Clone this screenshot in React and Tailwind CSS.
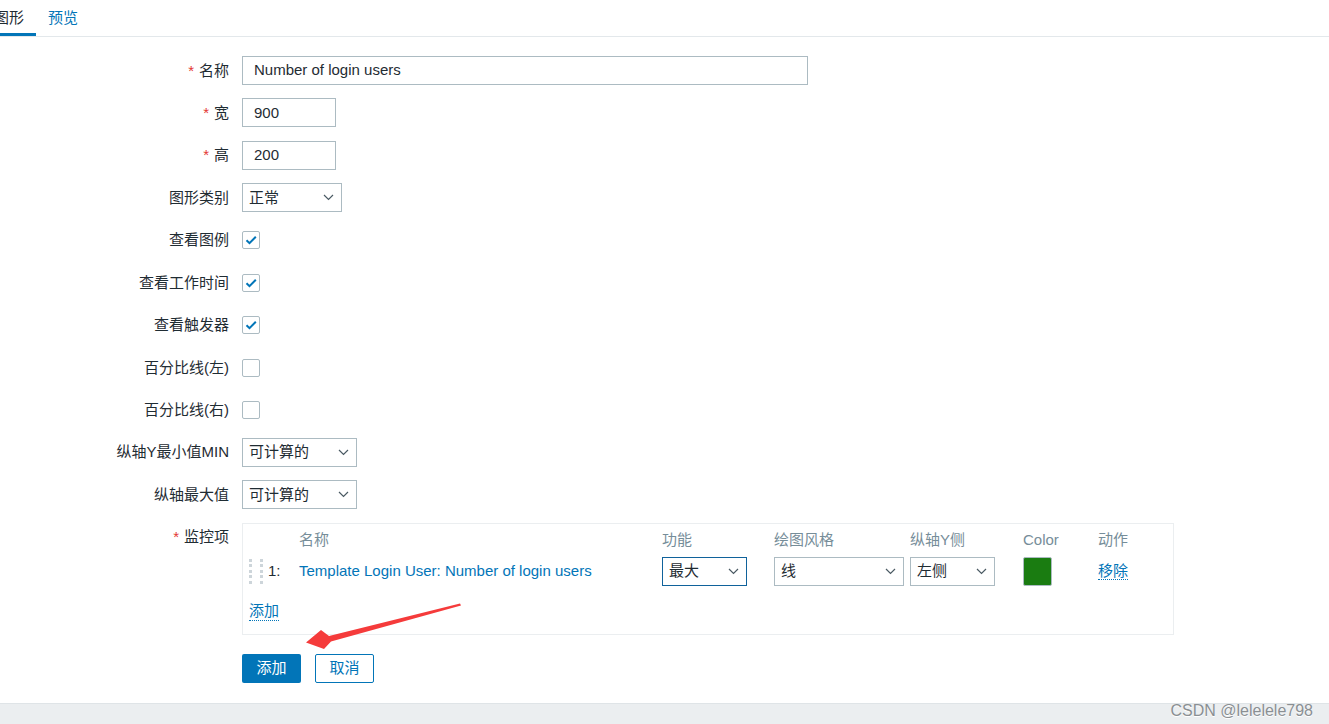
const FONT = { fontFamily: '"Liberation Sans", Arial, "Noto Sans CJK SC", sans-serif' };

function Chevron() {
  return (
    <svg width="11" height="7" viewBox="0 0 11 7" className="shrink-0">
      <path d="M1 1l4.5 4.5L10 1" fill="none" stroke="#4a5a63" strokeWidth="1.2" />
    </svg>
  );
}

function Select({ value, width, focused }) {
  return (
    <div
      className={`flex h-[29px] items-center justify-between bg-white pl-[6px] pr-[7px] text-[15px] text-[#1f2c33] border ${focused ? 'border-[#10629b]' : 'border-[#acbbc2]'}`}
      style={{ width }}
    >
      <span>{value}</span>
      <Chevron />
    </div>
  );
}

function Checkbox({ checked }) {
  return (
    <div className="flex h-[18px] w-[18px] items-center justify-center rounded-[2px] border border-[#acbbc2] bg-white">
      {checked && (
        <svg width="14" height="14" viewBox="0 0 14 14">
          <path d="M2.5 7.2l3 3L11.8 3.8" fill="none" stroke="#0275b8" strokeWidth="2" />
        </svg>
      )}
    </div>
  );
}

function Row({ label, required, top, children }) {
  return (
    <div className={`flex ${top ? 'items-start' : 'items-center min-h-[29px]'} gap-[13px]`}>
      <div className={`w-[229px] shrink-0 text-right text-[15px] text-[#1f2c33] leading-[18px] ${top ? 'pt-[5px]' : ''}`}>
        {required && <span className="mr-[5px] text-[#e33734]">*</span>}
        {label}
      </div>
      {children}
    </div>
  );
}

function Input({ value, width }) {
  return (
    <div
      className="flex h-[29px] items-center border border-[#acbbc2] bg-white px-[11px] text-[15px] text-[#1f2c33]"
      style={{ width }}
    >
      {value}
    </div>
  );
}

function DragHandle() {
  return (
    <div className="grid grid-cols-2 gap-x-[2px] gap-y-[2.5px]">
      {Array.from({ length: 10 }).map((_, i) => (
        <span key={i} className="h-[3px] w-[3px] bg-[#cdd5da]" />
      ))}
    </div>
  );
}

const cols = 'grid grid-cols-[19px_31px_363px_112px_136px_113px_75px_1fr] items-center';

export default function App() {
  return (
    <div className="relative min-h-[724px] w-full overflow-hidden bg-white" style={FONT}>
      {/* tabs */}
      <div className="flex h-[37px] border-b border-[#e3e8eb]">
        <div className="-ml-[18px] flex">
          <div className="flex h-[36px] items-center border-b-[3px] border-[#0275b8] px-[12px] pt-[3px] text-[15px] text-[#1f2c33]">
            图形
          </div>
          <div className="flex h-[36px] items-center px-[12px] text-[15px] text-[#0275b8]">预览</div>
        </div>
      </div>

      {/* form */}
      <div className="flex flex-col gap-[13.45px] pt-[19px]">
        <Row label="名称" required>
          <Input value="Number of login users" width={566} />
        </Row>
        <Row label="宽" required>
          <Input value="900" width={94} />
        </Row>
        <Row label="高" required>
          <Input value="200" width={94} />
        </Row>
        <Row label="图形类别">
          <Select value="正常" width={100} />
        </Row>
        <Row label="查看图例">
          <Checkbox checked />
        </Row>
        <Row label="查看工作时间">
          <Checkbox checked />
        </Row>
        <Row label="查看触发器">
          <Checkbox checked />
        </Row>
        <Row label="百分比线(左)">
          <Checkbox />
        </Row>
        <Row label="百分比线(右)">
          <Checkbox />
        </Row>
        <Row label="纵轴Y最小值MIN">
          <Select value="可计算的" width={115} />
        </Row>
        <Row label="纵轴最大值">
          <Select value="可计算的" width={115} />
        </Row>
        <Row label="监控项" required top>
          <div className="w-[932px] border border-[#ebeef0] pl-[6px] pt-[5px] pb-[10px] text-[15px]">
            <div className={`${cols} h-[22px] text-[#768d99]`}>
              <span />
              <span />
              <span>名称</span>
              <span>功能</span>
              <span>绘图风格</span>
              <span>纵轴Y侧</span>
              <span>Color</span>
              <span>动作</span>
            </div>
            <div className={`${cols} mt-[6px] h-[29px]`}>
              <DragHandle />
              <span className="text-[#1f2c33]">1:</span>
              <a href="#" className="text-[#0275b8]">Template Login User: Number of login users</a>
              <Select value="最大" width={85} focused />
              <Select value="线" width={130} />
              <Select value="左侧" width={85} />
              <div className="h-[29px] w-[29px] rounded-[2px] border border-[#acbbc2] bg-[#1a7c11]" />
              <span>
                <a href="#" className="border-b border-dotted border-[#0275b8] text-[#0275b8]">移除</a>
              </span>
            </div>
            <div className="mt-[14px] flex h-[24px] items-center">
              <a href="#" className="border-b border-dotted border-[#0275b8] leading-[18px] text-[#0275b8]">添加</a>
            </div>
          </div>
        </Row>
      </div>

      {/* buttons */}
      <div className="mt-[19px] flex gap-[14px] pl-[242px]">
        <button className="h-[29px] w-[59px] rounded-[2px] bg-[#0275b8] text-[15px] text-white">添加</button>
        <button className="h-[29px] w-[59px] rounded-[2px] border border-[#0275b8] bg-white text-[15px] text-[#0275b8]">取消</button>
      </div>

      {/* bottom band */}
      <div className="mt-[20px] flex h-[22px] justify-end border-t border-[#dfe4e7] bg-[#ebeef0] pr-[16px]">
        <span className="text-[16px] leading-[14px] text-[#8a8f93] [text-shadow:0_1px_0_#ffffff]">CSDN @lelelele798</span>
      </div>

      {/* annotation arrow */}
      <svg className="pointer-events-none absolute left-0 top-0" width="1329" height="724">
        <polygon
          points="460,603.5 329,636 321,630 306,642.5 324,649 331,641.5 461,605.5"
          fill="#f53b3b"
        />
      </svg>
    </div>
  );
}
